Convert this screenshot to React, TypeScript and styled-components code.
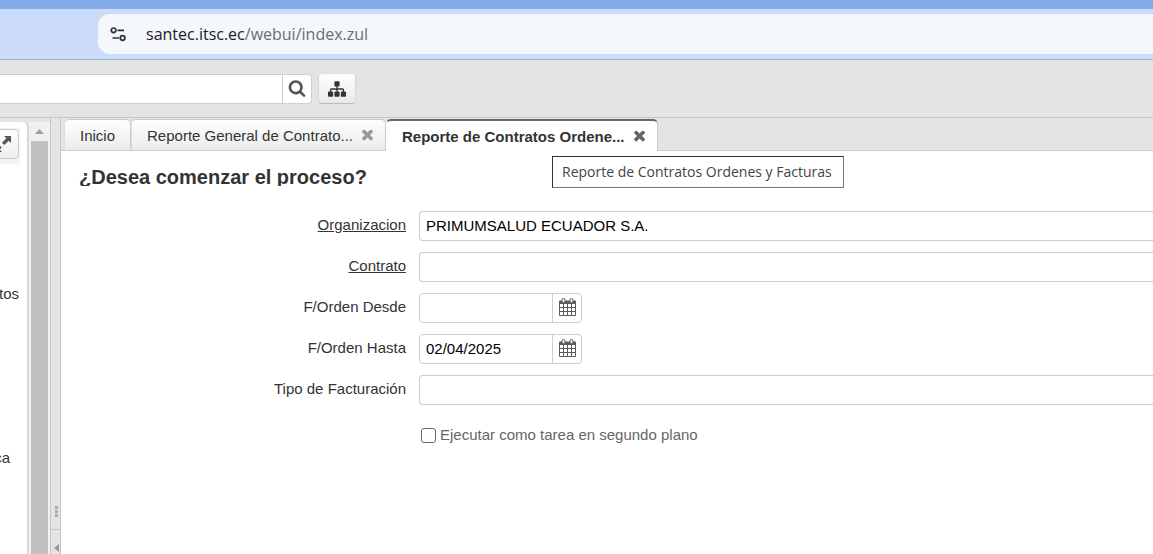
import React, { useState } from "react";
import styled, { createGlobalStyle, css } from "styled-components";

const GlobalStyle = createGlobalStyle`
  * { box-sizing: border-box; }
  html, body, #root { height: 100%; }
  body {
    margin: 0;
    overflow: hidden;
    background: #fff;
    color: #333;
    font: 15px/20px "Liberation Sans", Arial, sans-serif;
  }
  button, input { font: inherit; margin: 0; }
  button { padding: 0; cursor: pointer; }
`;

const Page = styled.div`
  display: flex;
  flex-direction: column;
  height: 100%;
`;

const WindowFrame = styled.div`
  flex: none;
  height: 9px;
  background: #84abe9;
`;

const BrowserBar = styled.div`
  flex: none;
  display: flex;
  height: 51px;
  padding: 5px 0 5px 98px;
  background: #cadcf7;
  border-bottom: 1px solid #9fb2cc;
`;

const AddressBar = styled.div`
  flex: 1;
  display: flex;
  align-items: center;
  gap: 19px;
  padding-left: 12px;
  background: #f4f7fc;
  border-radius: 12px 0 0 12px;
`;

const AddressInput = styled.div`
  color: #6a6d72;
  font: 16px/24px "Open Sans", "Noto Sans", sans-serif;
  white-space: nowrap;
`;

const Host = styled.span`
  color: #202124;
`;

const AppHeader = styled.header`
  flex: none;
  display: flex;
  align-items: flex-start;
  gap: 6px;
  height: 58px;
  padding-top: 14px;
  background: #e4e4e4;
  border-bottom: 1px solid #c5c5c5;
`;

const SearchBox = styled.div`
  display: flex;
  width: 312px;
  height: 30px;
  background: #fff;
  border: 1px solid #cfcfcf;
  border-left: 0;
  border-radius: 0 4px 4px 0;
`;

const BareInput = styled.input`
  flex: 1;
  min-width: 0;
  padding: 0 6px;
  border: 0;
  outline: 0;
  background: transparent;
  color: #000;
`;

const AddonButton = styled.button`
  flex: none;
  display: flex;
  align-items: center;
  justify-content: center;
  width: 29px;
  padding-bottom: 2px;
  border: 0;
  border-left: 1px solid #cfcfcf;
  background: transparent;
  color: #555;
`;

const RaisedButton = styled.button`
  display: flex;
  align-items: center;
  justify-content: center;
  width: 38px;
  height: 30px;
  border: 1px solid #d6d6d6;
  border-top-color: #f6f6f6;
  border-bottom-color: #bbb;
  border-radius: 4px;
  background: linear-gradient(#fefefe, #e9e9e9);
  color: #333;
`;

const Workspace = styled.div`
  flex: 1;
  display: flex;
  min-height: 0;
`;

const SidePanel = styled.aside`
  flex: none;
  display: flex;
  width: 50px;
  padding-top: 4px;
  background: #e4e4e4;
`;

const SideContent = styled.div`
  width: 29px;
  overflow: hidden;
  background: #fff;
  border-right: 2px solid #d8d8d8;
  border-radius: 0 6px 0 0;
`;

const SideToolbar = styled.div`
  display: flex;
  justify-content: flex-end;
  width: 20px;
  height: 36px;
  margin-top: 6px;
  padding: 1px 1px 0 0;
  background: #f4f4f4;
`;

const ExpandButton = styled.button`
  flex: none;
  display: flex;
  align-items: center;
  justify-content: flex-end;
  width: 38px;
  height: 30px;
  padding-right: 7px;
  border: 1px solid #ccc;
  border-radius: 4px;
  background: linear-gradient(#fefefe, #eee);
  color: #555;
`;

const MenuEntry = styled.a<{ $width: number }>`
  display: flex;
  justify-content: flex-end;
  width: ${(p) => p.$width}px;
  margin-top: 120px;
  margin-bottom: 144px;
  color: #333;
  text-decoration: none;

  & + & { margin-top: 0; }
`;

const ScrollTrack = styled.div`
  flex: 1;
  display: flex;
  flex-direction: column;
  padding: 0 2px;
  background: #f1f1f1;
`;

const ScrollUp = styled.div`
  display: flex;
  align-items: center;
  justify-content: center;
  height: 19px;
  color: #a0a0a0;
`;

const ScrollThumb = styled.div`
  flex: 1;
  background: #c1c1c1;
`;

const Splitter = styled.div`
  flex: none;
  display: flex;
  flex-direction: column;
  justify-content: flex-end;
  width: 11px;
  background: #e4e4e4;
  border: 1px solid #c5c5c5;
  border-width: 0 1px;
`;

const Grip = styled.div`
  display: grid;
  justify-content: end;
  gap: 1px;
  padding: 0 2px 12px 0;

  i { width: 3px; height: 3px; background: #aaa; }
`;

const CollapseButton = styled.button`
  display: flex;
  align-items: flex-end;
  justify-content: flex-end;
  height: 25px;
  padding: 0 1px 2px 0;
  border: 0;
  border-top: 1px solid #c5c5c5;
  background: transparent;
  color: #999;
`;

const Main = styled.main`
  flex: 1;
  min-width: 0;
`;

const TabStrip = styled.div`
  display: flex;
  align-items: flex-end;
  height: 33px;
  padding-left: 3px;
  background: #e4e4e4;
  border-bottom: 1px solid #ccc;
`;

const Tab = styled.div<{ $active?: boolean; $closable?: boolean }>`
  position: relative;
  display: flex;
  align-items: center;
  gap: 9px;
  height: 31px;
  padding: 1px ${(p) => (p.$closable ? 12 : 15)}px 0 15px;
  border: 1px solid #ccc;
  border-bottom: 0;
  border-left-color: #ddd;
  border-radius: 5px 5px 0 0;
  background: linear-gradient(#fdfdfd, #ececec);
  color: #333;
  ${(p) =>
    p.$active &&
    css`
      height: 32px;
      margin-bottom: -1px;
      border-top: 2px solid #666;
      border-left-color: #fff;
      background: #fff;
      font-weight: bold;
    `}
`;

const TabLabel = styled.button`
  border: 0;
  background: transparent;
  color: inherit;
  white-space: nowrap;
`;

const CloseButton = styled.button<{ $strong?: boolean }>`
  display: flex;
  border: 0;
  background: transparent;
  color: ${(p) => (p.$strong ? "#666" : "#999")};
`;

const Tooltip = styled.div`
  position: absolute;
  top: 35px;
  left: 165px;
  padding: 5px 11px 5px 9px;
  background: #fff;
  border: 1px solid #333;
  border-right-color: #777;
  border-bottom-color: #777;
  color: #444;
  font: 14px/20px "Open Sans", "Noto Sans", sans-serif;
  white-space: nowrap;
`;

const Title = styled.h1`
  height: 20px;
  margin: 15px 0 25px 18px;
  overflow: hidden;
  font-size: 20px;
  line-height: 22px;
  color: #333;
`;

const Form = styled.form`
  display: grid;
  gap: 11px;
`;

const FormRow = styled.div`
  display: grid;
  grid-template-columns: 345px 1fr;
  gap: 13px;
  height: 30px;
`;

const FieldLabel = styled.label<{ $link?: boolean }>`
  padding-top: 4px;
  text-align: right;
  text-decoration: ${(p) => (p.$link ? "underline" : "none")};
`;

const WideField = styled.div`
  display: flex;
  border: 1px solid #ccc;
  border-right: 0;
  border-radius: 4px 0 0 4px;
`;

const DateField = styled.div`
  display: flex;
  width: 163px;
  border: 1px solid #ccc;
  border-radius: 4px;
`;

const CheckRow = styled.label`
  display: flex;
  align-items: center;
  gap: 4px;
  margin: 9px 0 0 360px;
  color: #666;
`;

const CheckBox = styled.input`
  appearance: none;
  width: 15px;
  height: 15px;
  border: 1px solid #666;
  border-radius: 3px;
  background: #fff;

  &:checked { background: #666; }
`;

const paths = {
  search:
    "M1216 832q0-185-131.500-316.500t-316.500-131.500-316.500 131.500-131.500 316.500 131.500 316.500 316.500 131.500 316.500-131.500 131.500-316.500zm512 832q0 52-38 90t-90 38q-54 0-90-38l-343-342q-179 124-399 124-143 0-273.500-55.500t-225-150-150-225-55.500-273.500 55.500-273.500 150-225 225-150 273.500-55.500 273.500 55.500 225 150 150 225 55.500 273.500q0 220-124 399l343 343q37 37 37 90z",
  sitemap:
    "M1792 1248v320q0 40-28 68t-68 28h-320q-40 0-68-28t-28-68v-320q0-40 28-68t68-28h96v-192h-512v192h96q40 0 68 28t28 68v320q0 40-28 68t-68 28h-320q-40 0-68-28t-28-68v-320q0-40 28-68t68-28h96v-192h-512v192h96q40 0 68 28t28 68v320q0 40-28 68t-68 28h-320q-40 0-68-28t-28-68v-320q0-40 28-68t68-28h96v-192q0-52 38-90t90-38h512v-192h-96q-40 0-68-28t-28-68v-320q0-40 28-68t68-28h320q40 0 68 28t28 68v320q0 40-28 68t-68 28h-96v192h512q52 0 90 38t38 90v192h96q40 0 68 28t28 68z",
  times:
    "M1490 1322q0 40-28 68l-136 136q-28 28-68 28t-68-28l-294-294-294 294q-28 28-68 28t-68-28l-136-136q-28-28-28-68t28-68l294-294-294-294q-28-28-28-68t28-68l136-136q28-28 68-28t68 28l294 294 294-294q28-28 68-28t68 28l136 136q28 28 28 68t-28 68l-294 294 294 294q28 28 28 68z",
};

const Icon = ({ name, size, box = "0 0 1792 1792" }: { name: keyof typeof paths; size: number; box?: string }) => (
  <svg width={size} height={size} viewBox={box} fill="currentColor" aria-hidden="true">
    <path d={paths[name]} />
  </svg>
);

const CalendarIcon = () => (
  <svg width="17" height="18" viewBox="0 0 17 18" aria-hidden="true">
    <path
      d="M1 2.500h15a1 1 0 0 1 1 1V17a1 1 0 0 1-1 1H1a1 1 0 0 1-1-1V3.500a1 1 0 0 1 1-1zM1 6v3h3V6zM5 6v3h3V6zM9 6v3h3V6zM13 6v3h3V6zM1 10v3h3v-3zM5 10v3h3v-3zM9 10v3h3v-3zM13 10v3h3v-3zM1 14v3h3v-3zM5 14v3h3v-3zM9 14v3h3v-3zM13 14v3h3v-3z"
      fill="#5c5c5c"
      fillRule="evenodd"
    />
    <rect x="3" y="0.500" width="3" height="4" rx="1.300" fill="#fff" stroke="#5c5c5c" />
    <rect x="11" y="0.500" width="3" height="4" rx="1.300" fill="#fff" stroke="#5c5c5c" />
  </svg>
);

const SiteSettingsIcon = () => (
  <svg width="17" height="16" viewBox="0 0 17 16" fill="none" stroke="#303236" strokeWidth="1.7" aria-hidden="true">
    <circle cx="3.600" cy="4.300" r="2.300" />
    <path d="M7.500 4.300H14M2.500 12H9" />
    <circle cx="12.600" cy="12" r="2.300" />
  </svg>
);

const ExpandIcon = () => (
  <svg width="16" height="16" viewBox="0 0 16 16" fill="currentColor" aria-hidden="true">
    <path d="M9 0h7v7l-2.300-2.300L9.300 9 7 6.700l4.400-4.400z" />
    <path d="M7 16H0V9l2.300 2.300 2.200-2 2.200 2.200-2 2.200z" />
  </svg>
);

const Close = ({ strong }: { strong?: boolean }) => (
  <CloseButton type="button" aria-label="Cerrar" $strong={strong}>
    <Icon name="times" size={11} box="302 430 1188 1188" />
  </CloseButton>
);

const DateInput = ({ id, initial = "" }: { id: string; initial?: string }) => {
  const [value, setValue] = useState(initial);
  return (
    <DateField>
      <BareInput id={id} value={value} onChange={(e) => setValue(e.target.value)} />
      <AddonButton type="button" aria-label="Abrir calendario">
        <CalendarIcon />
      </AddonButton>
    </DateField>
  );
};

export default function App() {
  return (
    <Page>
      <GlobalStyle />
      <WindowFrame />
      <BrowserBar>
        <AddressBar>
          <SiteSettingsIcon />
          <AddressInput>
            <Host>santec.itsc.ec</Host>/webui/index.zul
          </AddressInput>
        </AddressBar>
      </BrowserBar>

      <AppHeader>
        <SearchBox>
          <BareInput aria-label="Buscar" />
          <AddonButton type="button" aria-label="Buscar">
            <Icon name="search" size={18} />
          </AddonButton>
        </SearchBox>
        <RaisedButton type="button" aria-label="Menú">
          <Icon name="sitemap" size={18} />
        </RaisedButton>
      </AppHeader>

      <Workspace>
        <SidePanel>
          <SideContent>
            <SideToolbar>
              <ExpandButton type="button" aria-label="Expandir">
                <ExpandIcon />
              </ExpandButton>
            </SideToolbar>
            <MenuEntry href="#tos" $width={19}>tos</MenuEntry>
            <MenuEntry href="#ca" $width={10}>ca</MenuEntry>
          </SideContent>
          <ScrollTrack>
            <ScrollUp>
              <svg width="9" height="5" viewBox="0 0 9 5" fill="currentColor"><path d="M0 5 4.500 0 9 5z" /></svg>
            </ScrollUp>
            <ScrollThumb />
          </ScrollTrack>
        </SidePanel>

        <Splitter>
          <Grip><i /><i /><i /></Grip>
          <CollapseButton type="button" aria-label="Contraer">
            <svg width="5" height="8" viewBox="0 0 5 8" fill="currentColor"><path d="M5 0v8L0 4z" /></svg>
          </CollapseButton>
        </Splitter>

        <Main>
          <TabStrip>
            <Tab>
              <TabLabel type="button">Inicio</TabLabel>
            </Tab>
            <Tab $closable>
              <TabLabel type="button">Reporte General de Contrato...</TabLabel>
              <Close />
            </Tab>
            <Tab $closable $active>
              <TabLabel type="button">Reporte de Contratos Ordene...</TabLabel>
              <Close strong />
              <Tooltip role="tooltip">Reporte de Contratos Ordenes y Facturas</Tooltip>
            </Tab>
          </TabStrip>

          <Title>¿Desea comenzar el proceso?</Title>

          <Form>
            <FormRow>
              <FieldLabel htmlFor="org" $link>Organizacion</FieldLabel>
              <WideField><BareInput id="org" defaultValue="PRIMUMSALUD ECUADOR S.A." /></WideField>
            </FormRow>
            <FormRow>
              <FieldLabel htmlFor="contract" $link>Contrato</FieldLabel>
              <WideField><BareInput id="contract" /></WideField>
            </FormRow>
            <FormRow>
              <FieldLabel htmlFor="from">F/Orden Desde</FieldLabel>
              <DateInput id="from" />
            </FormRow>
            <FormRow>
              <FieldLabel htmlFor="to">F/Orden Hasta</FieldLabel>
              <DateInput id="to" initial="02/04/2025" />
            </FormRow>
            <FormRow>
              <FieldLabel htmlFor="billing">Tipo de Facturación</FieldLabel>
              <WideField><BareInput id="billing" /></WideField>
            </FormRow>
            <CheckRow>
              <CheckBox type="checkbox" />
              Ejecutar como tarea en segundo plano
            </CheckRow>
          </Form>
        </Main>
      </Workspace>
    </Page>
  );
}
